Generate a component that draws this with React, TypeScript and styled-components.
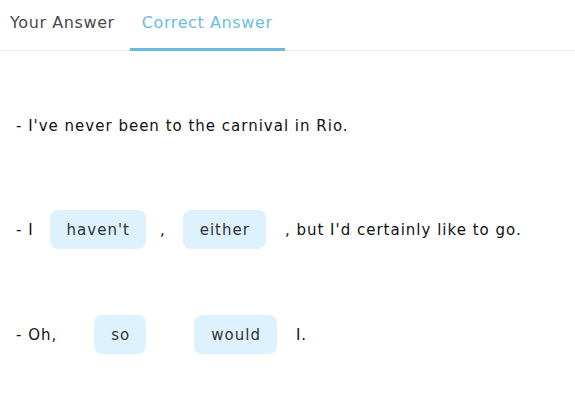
import React from "react"
import styled, { createGlobalStyle } from "styled-components"

const GlobalStyle = createGlobalStyle`
  html, body {
    margin: 0;
    padding: 0;
    background: #fff;
  }
  body {
    font-family: "DejaVu Sans", Verdana, sans-serif;
    width: 575px;
  }
`

const TabBar = styled.div`
  display: flex;
  gap: 3px;
  height: 50px;
  border-bottom: 1px solid #efefef;
`

const Tab = styled.div<{ $active?: boolean }>`
  display: flex;
  align-items: center;
  padding: 0 12px 3px;
  font-size: 16px;
  letter-spacing: 0.6px;
  color: ${p => (p.$active ? "#6cbde0" : "#4a4a4a")};
  border-bottom: 3px solid ${p => (p.$active ? "#6bbadb" : "transparent")};
  margin-bottom: -1px;
  &:first-child {
    padding-left: 10px;
  }
`

const Content = styled.div`
  display: flex;
  flex-direction: column;
  padding: 0 16px;
`

const Row = styled.div<{ $top: number }>`
  display: flex;
  align-items: center;
  min-height: 39px;
  margin-top: ${p => p.$top}px;
  font-size: 15px;
  letter-spacing: 1px;
  color: #111;
  white-space: pre;
`

const Text = styled.span<{ $ml?: number }>`
  margin-left: ${p => p.$ml ?? 0}px;
`

const Chip = styled.span<{ $ml?: number }>`
  display: inline-flex;
  align-items: center;
  height: 39px;
  padding: 0 16px 0 17px;
  margin-left: ${p => p.$ml ?? 0}px;
  border-radius: 8px;
  background: #ddf2fe;
  color: #333;
`

export default function App() {
  return (
    <>
      <GlobalStyle />
      <TabBar>
        <Tab>Your Answer</Tab>
        <Tab $active>Correct Answer</Tab>
      </TabBar>
      <Content>
        <Row $top={55}>
          <Text>- I've never been to the carnival in Rio.</Text>
        </Row>
        <Row $top={65}>
          <Text>- I</Text>
          <Chip $ml={16}>haven't</Chip>
          <Text $ml={14}>,</Text>
          <Chip $ml={17}>either</Chip>
          <Text $ml={19}>, but I'd certainly like to go.</Text>
        </Row>
        <Row $top={66}>
          <Text>- Oh,</Text>
          <Chip $ml={37}>so</Chip>
          <Chip $ml={48}>would</Chip>
          <Text $ml={19}>I.</Text>
        </Row>
      </Content>
    </>
  )
}
